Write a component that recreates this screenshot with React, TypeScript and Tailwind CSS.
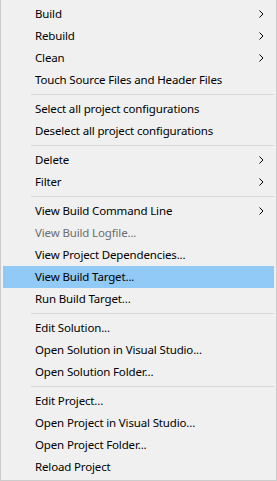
import type { ReactNode } from "react"

type Item = { label: string; sub?: boolean; disabled?: boolean; active?: boolean }

const groups: Item[][] = [
  [
    { label: "Build", sub: true },
    { label: "Rebuild", sub: true },
    { label: "Clean", sub: true },
    { label: "Touch Source Files and Header Files" },
  ],
  [{ label: "Select all project configurations" }, { label: "Deselect all project configurations" }],
  [
    { label: "Delete", sub: true },
    { label: "Filter", sub: true },
  ],
  [
    { label: "View Build Command Line", sub: true },
    { label: "View Build Logfile...", disabled: true },
    { label: "View Project Dependencies..." },
    { label: "View Build Target...", active: true },
    { label: "Run Build Target..." },
  ],
  [
    { label: "Edit Solution..." },
    { label: "Open Solution in Visual Studio..." },
    { label: "Open Solution Folder..." },
  ],
  [
    { label: "Edit Project..." },
    { label: "Open Project in Visual Studio..." },
    { label: "Open Project Folder..." },
    { label: "Reload Project" },
  ],
]

function Chevron() {
  return (
    <svg width="5" height="8" viewBox="0 0 5 8" className="absolute right-[10px] top-[7px]">
      <path d="M0.5 0.5 L4 4 L0.5 7.5" fill="none" stroke="#000" strokeWidth="1" />
    </svg>
  )
}

function Row({ item }: { item: Item }): ReactNode {
  return (
    <div
      className={
        "relative flex h-[22px] items-center pl-[32px] text-[11.5px] leading-none tracking-[-0.15px] " +
        (item.active ? "bg-[#91c9f7] " : "") +
        (item.disabled ? "text-[#6d6d6d]" : "text-black")
      }
    >
      <span>{item.label}</span>
      {item.sub && <Chevron />}
    </div>
  )
}

export default function App() {
  return (
    <div
      className="h-[481px] w-[277px] border-x border-b border-[#cccccc] bg-[#f0f0f0] px-[2px] pb-[2px] pt-[3px]"
      style={{ fontFamily: '"Segoe UI", "Noto Sans", sans-serif' }}
    >
      {groups.map((g, i) => (
        <div key={i}>
          {i > 0 && (
            <div className="py-[3px] pl-[28px]">
              <div className="h-px bg-[#d7d7d7]" />
            </div>
          )}
          {g.map((item) => (
            <Row item={item} key={item.label} />
          ))}
        </div>
      ))}
    </div>
  )
}
